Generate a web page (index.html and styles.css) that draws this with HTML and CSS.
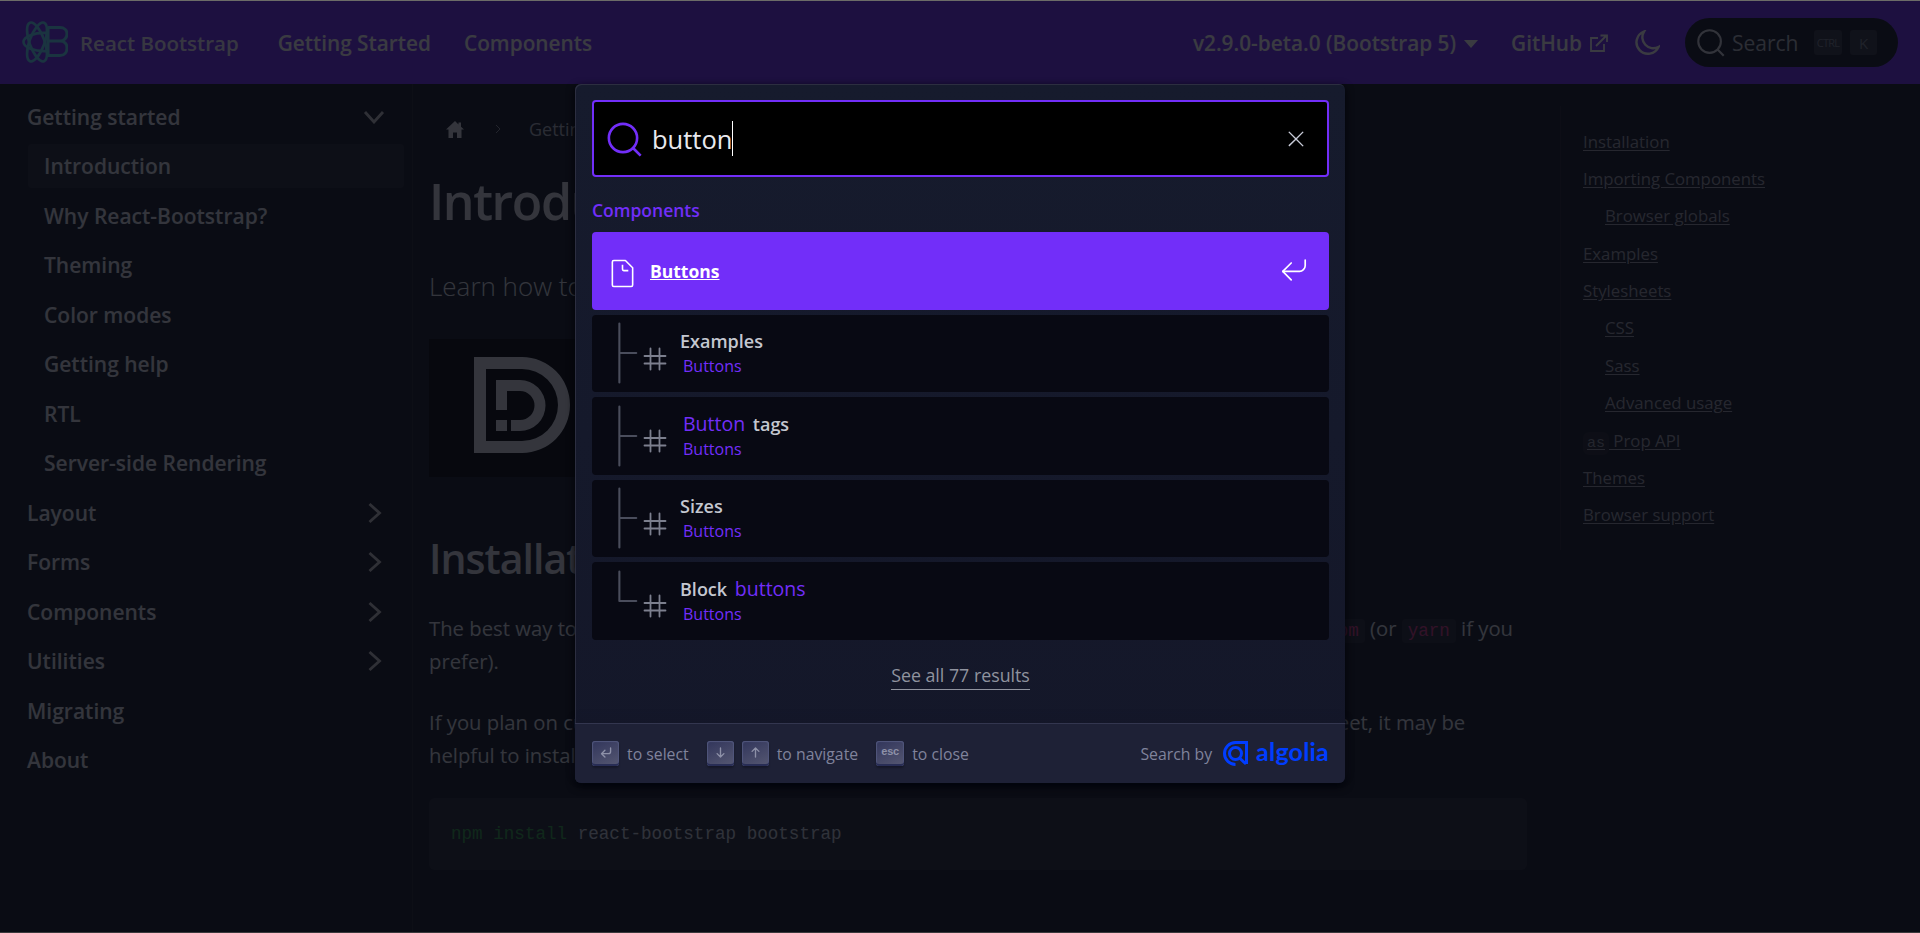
FILE: index.html
```html
<!DOCTYPE html>
<html lang="en">
<head>
<meta charset="utf-8">
<title>Introduction | React Bootstrap</title>
<link rel="stylesheet" href="styles.css">
</head>
<body>
<div class="edge"></div>
<div class="app">
  <header class="nav">
    <a class="brand">
      <svg class="brand-logo" viewBox="0 0 46 44" fill="none" stroke="currentColor" stroke-width="2.6">
        <ellipse cx="15" cy="22" rx="7.500" ry="20.500" transform="rotate(-20 15 22)"/>
        <ellipse cx="15" cy="22" rx="7.500" ry="20.500" transform="rotate(20 15 22)"/>
        <path d="M26 13C12 12 1.500 17 1.500 22S12 32 26 31"/>
        <path stroke-width="3" d="M26 7.500H38c4 0 7 2.500 7 6.500s-3 7-7 7H26M38 21c4.500 0 7 3 7 7s-2.500 7.500-7 7.500H26V7.500"/>
      </svg>
      <span>React Bootstrap</span>
    </a>
    <a class="nav-link link-first">Getting Started</a>
    <a class="nav-link link-second">Components</a>
    <div class="nav-right">
      <a class="nav-link version">v2.9.0-beta.0 (Bootstrap 5)<i class="caret"></i></a>
      <a class="nav-link github">GitHub
        <svg class="ext" viewBox="0 0 18 18" fill="none" stroke="currentColor" stroke-width="1.800"><path d="M8 4H1v13h13v-7"/><path d="M6 12 16 2M10.500 1.500h6.500V8"/></svg>
      </a>
      <svg class="moon" viewBox="0 0 26 26" fill="none" stroke="currentColor" stroke-width="2.400"><path d="M10 1.500A11.500 11.500 0 1 0 24.500 17 11 11 0 0 1 10 1.500z"/></svg>
      <div class="nav-search">
        <svg class="nav-search-icon" viewBox="0 0 20 20"><path d="M14.386 14.386l4.0877 4.0877-4.0877-4.0877c-2.9418 2.9419-7.7115 2.9419-10.6533 0-2.9419-2.9418-2.9419-7.7115 0-10.6533 2.9418-2.9419 7.7115-2.9419 10.6533 0 2.9419 2.9418 2.9419 7.7115 0 10.6533z"/></svg>
        <span class="nav-search-text">Search</span>
        <kbd class="nav-key key-ctrl">CTRL</kbd>
        <kbd class="nav-key key-k">K</kbd>
      </div>
    </div>
  </header>

  <div class="main">
    <aside class="sidebar">
      <div class="side-head">Getting started<svg class="chev chev-down" viewBox="0 0 22 14"><path d="M2 2l9 10 9-10"/></svg></div>
      <div class="side-item active">Introduction</div>
      <div class="side-item">Why React-Bootstrap?</div>
      <div class="side-item">Theming</div>
      <div class="side-item">Color modes</div>
      <div class="side-item">Getting help</div>
      <div class="side-item">RTL</div>
      <div class="side-item">Server-side Rendering</div>
      <div class="side-head">Layout<svg class="chev" viewBox="0 0 14 22"><path d="M2 2l10 9-10 9"/></svg></div>
      <div class="side-head">Forms<svg class="chev" viewBox="0 0 14 22"><path d="M2 2l10 9-10 9"/></svg></div>
      <div class="side-head">Components<svg class="chev" viewBox="0 0 14 22"><path d="M2 2l10 9-10 9"/></svg></div>
      <div class="side-head">Utilities<svg class="chev" viewBox="0 0 14 22"><path d="M2 2l10 9-10 9"/></svg></div>
      <div class="side-head">Migrating</div>
      <div class="side-head">About</div>
    </aside>

    <main class="content">
      <div class="crumbs">
        <svg class="home" viewBox="0 0 18 17"><path d="M9 0 0 8.500h2.500V17h4.500v-5.500h4V17h4.500V8.500H18L15 5.700V1.500h-2.500v1.900z"/></svg>
        <svg class="crumb-sep" viewBox="0 0 6 10"><path d="M1 1l4 4-4 4"/></svg>
        <span>Getting started</span>
      </div>
      <h1>Introduction</h1>
      <p class="lead">Learn how to include React Bootstrap in your project.</p>
      <div class="banner">
        <svg class="banner-logo" viewBox="0 0 97 96">
          <path fill-rule="evenodd" d="M0 0H48A48 48 0 0 1 48 96H0ZM12 12V84H48A36 36 0 0 0 48 12Z"/>
          <path d="M22 23H46A25.500 25.500 0 0 1 46 74H37V63H46A14.500 14.500 0 0 0 46 34H33V53H22Z"/>
          <rect x="22" y="63" width="11" height="11"/>
        </svg>
      </div>
      <h2>Installation</h2>
      <p class="para para-one">The best way to consume React-Bootstrap is via the npm package which you can install with <code class="chip-shift">npm</code> (or <code>yarn</code> if you<br>prefer).</p>
      <p class="para para-two">If you plan on customizing the Bootstrap Sass files, or don't want to use a CDN for the <span class="shift">stylesheet</span>, it may be<br>helpful to install vanilla Bootstrap as well.</p>
      <pre class="code"><span class="cmd">npm install</span> react-bootstrap bootstrap</pre>
    </main>

    <nav class="toc">
      <a class="toc-item">Installation</a>
      <a class="toc-item">Importing Components</a>
      <a class="toc-item sub">Browser globals</a>
      <a class="toc-item">Examples</a>
      <a class="toc-item">Stylesheets</a>
      <a class="toc-item sub">CSS</a>
      <a class="toc-item sub">Sass</a>
      <a class="toc-item sub">Advanced usage</a>
      <a class="toc-item"><code class="toc-code">as</code> Prop API</a>
      <a class="toc-item">Themes</a>
      <a class="toc-item">Browser support</a>
    </nav>
  </div>

  <div class="overlay">
    <div class="modal">
      <div class="modal-body">
        <form class="searchbar">
          <svg class="search-icon" viewBox="0 0 20 20"><path d="M14.386 14.386l4.0877 4.0877-4.0877-4.0877c-2.9418 2.9419-7.7115 2.9419-10.6533 0-2.9419-2.9418-2.9419-7.7115 0-10.6533 2.9418-2.9419 7.7115-2.9419 10.6533 0 2.9419 2.9418 2.9419 7.7115 0 10.6533z"/></svg>
          <span class="query">button</span><i class="cursor"></i>
          <svg class="reset" viewBox="0 0 20 20"><path d="M10 10l5.09-5.09L10 10l5.09 5.09L10 10zm0 0L4.91 14.91 10 10 4.91 4.91 10 10z"/></svg>
        </form>
        <div class="source">Components</div>

        <a class="hit selected">
          <svg class="doc" viewBox="0 0 20 20"><path d="M17 6v12c0 .52-.2 1-1 1H4c-.7 0-1-.33-1-1V2c0-.55.42-1 1-1h8l5 5zM14 8h-3.130c-.51 0-.87-.34-.87-.87V4"/></svg>
          <span class="hit-page">Buttons</span>
          <svg class="enter" viewBox="0 0 20 20"><path d="M18 3v4c0 2-2 4-4 4H2"/><path d="M8 17l-6-6 6-6"/></svg>
        </a>

        <a class="hit">
          <svg class="tree" viewBox="0 0 24 54"><path d="M8 6v42M20 27H8.300"/></svg>
          <svg class="hash" viewBox="0 0 20 20"><path d="M13 13h4-4V8H7v5h6v4-4H7V8H3h4V3v5h6V3v5h4-4v5zm-6 0v4-4H3h4z"/></svg>
          <div class="hit-text"><div class="hit-title">Examples</div><div class="hit-path">Buttons</div></div>
        </a>
        <a class="hit">
          <svg class="tree" viewBox="0 0 24 54"><path d="M8 6v42M20 27H8.300"/></svg>
          <svg class="hash" viewBox="0 0 20 20"><path d="M13 13h4-4V8H7v5h6v4-4H7V8H3h4V3v5h6V3v5h4-4v5zm-6 0v4-4H3h4z"/></svg>
          <div class="hit-text"><div class="hit-title"><mark>Button</mark> tags</div><div class="hit-path">Buttons</div></div>
        </a>
        <a class="hit">
          <svg class="tree" viewBox="0 0 24 54"><path d="M8 6v42M20 27H8.300"/></svg>
          <svg class="hash" viewBox="0 0 20 20"><path d="M13 13h4-4V8H7v5h6v4-4H7V8H3h4V3v5h6V3v5h4-4v5zm-6 0v4-4H3h4z"/></svg>
          <div class="hit-text"><div class="hit-title">Sizes</div><div class="hit-path">Buttons</div></div>
        </a>
        <a class="hit">
          <svg class="tree" viewBox="0 0 24 54"><path d="M8 6v21M20 27H8.300"/></svg>
          <svg class="hash" viewBox="0 0 20 20"><path d="M13 13h4-4V8H7v5h6v4-4H7V8H3h4V3v5h6V3v5h4-4v5zm-6 0v4-4H3h4z"/></svg>
          <div class="hit-text"><div class="hit-title">Block <mark>buttons</mark></div><div class="hit-path">Buttons</div></div>
        </a>

        <div class="see-all"><a>See all 77 results</a></div>
      </div>

      <footer class="modal-foot">
        <ul class="commands">
          <li><kbd class="key"><svg viewBox="0 0 15 15"><path d="M12 3.530v3c0 1-1 2-2 2H4M7 11.530l-3-3 3-3"/></svg></kbd><span>to select</span></li>
          <li><kbd class="key"><svg viewBox="0 0 15 15"><path d="M7.500 3.500v8M10.500 8.500l-3 3-3-3"/></svg></kbd><kbd class="key"><svg viewBox="0 0 15 15"><path d="M7.500 11.500v-8M10.500 6.500l-3-3-3 3"/></svg></kbd><span>to navigate</span></li>
          <li><kbd class="key key-esc">esc</kbd><span>to close</span></li>
        </ul>
        <div class="by">
          <span>Search by</span>
          <svg class="algolia-icon" viewBox="0 0 25 25" fill="none" stroke="currentColor" stroke-width="3"><path d="M23.500 23V1.500H12.500a11 11 0 0 0 0 22"/><circle cx="12.500" cy="12.500" r="6"/><path d="M16.500 17l6.500 6"/></svg>
          <span class="algolia-word">algolia</span>
        </div>
      </footer>
    </div>
  </div>
</div>
<div class="edge edge-bottom"></div>
</body>
</html>
```

FILE: styles.css
```css
* { box-sizing: border-box; }
html, body { margin: 0; height: 100%; }
body {
  background: #12161f;
  color: #dee2e6;
  font-family: "Open Sans", "Noto Sans", "Liberation Sans", sans-serif;
  overflow: hidden;
  display: flex;
  flex-direction: column;
}
a { color: inherit; text-decoration: none; }
.edge { height: 1px; background: #6c6c68; flex: none; }
.edge-bottom { background: #3a3a3c; }
.app { position: relative; flex: 1; min-height: 0; display: flex; flex-direction: column; }

/* navbar */
.nav {
  height: 83px;
  flex: none;
  background: #702cf9;
  display: flex;
  align-items: center;
  padding-left: 22px;
  padding-right: 22px;
  color: #fff;
}
.brand { display: flex; align-items: center; font-size: 20.500px; font-weight: 600; color: rgba(255,255,255,.92); }
.brand-logo { width: 46px; height: 44px; color: #61dafb; margin-right: 12px; margin-bottom: 1px; }
.nav-link { font-size: 20.800px; font-weight: 600; white-space: nowrap; }
.link-first { margin-left: 39px; }
.link-second { margin-left: 33px; }
.nav-right { margin-left: auto; display: flex; align-items: center; }
.version { display: flex; align-items: center; }
.caret { width: 0; height: 0; border-left: 7.500px solid transparent; border-right: 7.500px solid transparent; border-top: 8px solid currentColor; margin-left: 8px; margin-top: 3px; }
.github { margin-left: 33px; display: flex; align-items: center; }
.ext { width: 18px; height: 18px; margin-left: 8px; }
.moon { width: 26px; height: 26px; margin-left: 26px; color: #fff; }
.nav-search {
  margin-left: 25px;
  width: 213px;
  height: 49px;
  border-radius: 25px;
  background: #12161f;
  display: flex;
  align-items: center;
  padding-left: 11px;
  color: #b4b8be;
}
.nav-search-icon { width: 30px; height: 30px; fill: none; stroke: #d5d8dc; stroke-width: 1.400; }
.nav-search-text { margin-left: 6px; font-size: 21px; font-weight: 500; width: 82px; }
.nav-key {
  height: 25px;
  border-radius: 3px;
  background: #2e323c;
  display: flex;
  align-items: center;
  justify-content: center;
  color: #7b818b;
  font-family: "Open Sans", sans-serif;
}
.key-ctrl { width: 28px; font-size: 11px; letter-spacing: -.8px; }
.key-k { width: 27px; margin-left: 8px; font-size: 15px; }

/* columns */
.main { flex: 1; min-height: 0; display: grid; grid-template-columns: 413px 1132px 1fr; }

.sidebar { border-right: 1px solid rgba(255,255,255,.06); padding: 8px 8px 0 28px; }
.side-head, .side-item {
  height: 49.500px;
  display: flex;
  align-items: center;
  font-size: 21px;
  font-weight: 600;
  white-space: nowrap;
}
.side-item { padding-left: 16px; }
.side-item.active { background: rgba(255,255,255,.07); border-radius: 4px; height: 44px; margin-top: 2px; margin-bottom: 3.500px; }
.side-head { justify-content: space-between; padding-right: 22px; margin-left: -1px; }
.chev { fill: none; stroke: #c8c8c8; stroke-width: 2.800; width: 15px; height: 22px; }
.chev-down { width: 22px; height: 14px; margin-right: -3px; }

.content { padding: 34px 0 0 16px; width: 1115px; }
.crumbs { display: flex; align-items: center; height: 22px; font-size: 18px; color: #adb5bd; }
.home { width: 18px; height: 17px; fill: #dee2e6; margin-left: 17px; }
.crumb-sep { width: 6px; height: 10px; fill: none; stroke: #8a929a; stroke-width: 1; margin-left: 31px; margin-right: 28px; }
h1 { margin: 28px 0 0; font-size: 50px; line-height: 66px; font-weight: 600; letter-spacing: -1.400px; }
.lead { margin: 34px 0 0; font-size: 26px; line-height: 36px; font-weight: 300; }
.banner { margin-top: 35px; height: 138px; width: 600px; background: #000; padding: 18px 0 0 45px; }
.banner-logo { width: 97px; height: 96px; fill: #dee2e6; display: block; }
h2 { margin: 53px 0 0; font-size: 41px; line-height: 56px; font-weight: 600; letter-spacing: -1px; }
.para { margin: 0; font-size: 20.300px; line-height: 33px; width: 1098px; white-space: nowrap; }
.para-one { margin-top: 26px; }
.para-two { margin-top: 28px; }
.chip-shift { margin-left: 23px; }
.shift { margin-left: 31px; }
.para code { font-family: "Liberation Mono", monospace; font-size: 17.500px; line-height: 1; color: #d63384; background: rgba(255,255,255,.07); border-radius: 4px; padding: 2px 6px; }
.code {
  margin: 26px 0 0;
  width: 1098px;
  height: 72px;
  background: rgba(255,255,255,.07);
  border-radius: 6px;
  padding: 0 22px;
  line-height: 72px;
  font-family: "Liberation Mono", monospace;
  font-size: 17.600px;
  color: #c9d1d9;
}
.cmd { color: #2ea043; }

.toc { margin: 22px 0 0 15px; padding: 16.500px 0 0 22px; border-left: 1px solid rgba(255,255,255,.05); height: 444px; display: flex; flex-direction: column; align-items: flex-start; }
.toc-item { height: 37.400px; line-height: 37.400px; font-size: 16.800px; color: #9a9da6; text-decoration: underline; text-underline-offset: 2px; white-space: nowrap; }
.toc-item.sub { margin-left: 22px; }
.toc-code { font-family: "Liberation Mono", monospace; font-size: 15px; background: rgba(255,255,255,.05); border-radius: 6px; padding: 3px 4px; color: #8f929b; }

/* overlay + search modal */
.overlay {
  position: absolute;
  inset: 0;
  background: rgba(9,10,17,.8);
  display: flex;
  justify-content: center;
  align-items: flex-start;
  padding-top: 83px;
}
.modal {
  width: 770px;
  height: 699px;
  border-radius: 6px;
  background: linear-gradient(#161b2d, #141729);
  box-shadow: inset 1px 1px 0 0 #2c2e40, 0 3px 8px 0 #000309;
  display: flex;
  flex-direction: column;
  color: #c4c7dc;
}
.modal-body { flex: 1; padding: 16px 16px 0 17px; }
.searchbar {
  height: 77px;
  background: #000;
  border: 2.500px solid #722ef9;
  border-radius: 4px;
  display: flex;
  align-items: center;
  padding-left: 11.500px;
}
.search-icon { width: 37.500px; height: 37.500px; fill: none; stroke: #722ef9; stroke-width: 1.400; flex: none; margin-top: 2px; }
.query { margin-left: 9px; font-size: 25.500px; color: #e9e9ee; }
.cursor { width: 1px; height: 35px; background: #fff; display: block; margin-left: 0; }
.reset { width: 28px; height: 28px; margin-left: auto; margin-right: 17px; fill: none; stroke: #c8cbd8; stroke-width: 1; }
.source { height: 55px; padding-top: 20px; line-height: 26px; font-size: 17.500px; font-weight: 600; color: #722ef9; }

.hit {
  display: flex;
  align-items: center;
  height: 77.500px;
  margin-bottom: 5px;
  border-radius: 4px;
  background: #080913;
}
.hit.selected { background: #722ef9; color: #fff; }
.doc { width: 29px; height: 29px; margin-left: 16px; fill: none; stroke: #fff; stroke-width: 1.100; stroke-linejoin: round; flex: none; margin-top: 5px; }
.hit-page { margin-left: 13px; font-size: 17.500px; font-weight: 700; text-decoration: underline; margin-top: 1px; }
.enter { width: 28px; height: 28px; margin-left: auto; margin-right: 21px; fill: none; stroke: #fff; stroke-width: 1.200; stroke-linecap: round; stroke-linejoin: round; margin-top: -1px; }
.tree { width: 34px; height: 76px; margin-left: 16px; fill: none; stroke: #4a4d5c; stroke-width: 1.500; stroke-linecap: round; flex: none; }
.hash { width: 30px; height: 30px; margin-left: -2px; margin-top: 11px; fill: none; stroke: #7c7f8e; stroke-width: 1.200; stroke-linecap: round; stroke-linejoin: round; flex: none; }
.hit-text { margin-left: 10px; }
.hit-title { font-size: 18px; font-weight: 600; color: #c4c7d0; line-height: 24px; margin-top: 1px; white-space: pre-wrap; }
.hit-title mark { background: none; color: #722ef9; margin-left: 3px; font-size: 19.500px; font-weight: 500; margin-right: 3px; }
.hit-path { margin: 2px 0 0 3px; font-size: 16px; color: #722ef9; line-height: 23px; }
.see-all { text-align: center; margin-top: 21px; font-size: 17.800px; color: #90939f; line-height: 28px; }
.see-all a { display: inline-block; border-bottom: 1px solid #90939f; height: 29px; }

.modal-foot {
  height: 60px;
  flex: none;
  background: #1e2136;
  border-top: 1px solid #33364f;
  border-radius: 0 0 6px 6px;
  box-shadow: 0 -4px 8px rgba(20,22,40,.4);
  display: flex;
  align-items: center;
  justify-content: space-between;
  padding: 0 16px 0 17px;
  font-size: 15.800px;
  color: #80839c;
}
.commands { display: flex; list-style: none; margin: 0; padding: 0; }
.commands li { display: flex; align-items: center; margin-right: 18px; }
.commands li span { margin-left: 8px; }
.key {
  width: 27px;
  height: 25px;
  display: flex;
  align-items: center;
  justify-content: center;
  border-radius: 3px;
  background: linear-gradient(-26.500deg, #565872, #31355b);
  box-shadow: inset 0 -2px 0 0 #282d55, inset 0 0 1px 1px #51577d, 0 2px 2px 0 rgba(3,4,9,.3);
  color: #8e91a8;
  padding-bottom: 2px;
}
.key + .key { margin-left: 8px; }
.key svg { width: 17px; height: 17px; fill: none; stroke: currentColor; stroke-width: 1.200; stroke-linecap: round; stroke-linejoin: round; }
.key-esc { width: 28px; font-family: "Liberation Sans", sans-serif; font-size: 11px; font-weight: 700; letter-spacing: -.2px; line-height: 1; padding-bottom: 4px; }
.by { display: flex; align-items: center; }
.algolia-icon { width: 25px; height: 25px; color: #003dff; margin-left: 11px; }
.algolia-word { margin-left: 8px; font-family: "Lato", sans-serif; font-size: 25px; font-weight: 700; color: #003dff; letter-spacing: .2px; line-height: 25px; margin-top: -5px; }
```
